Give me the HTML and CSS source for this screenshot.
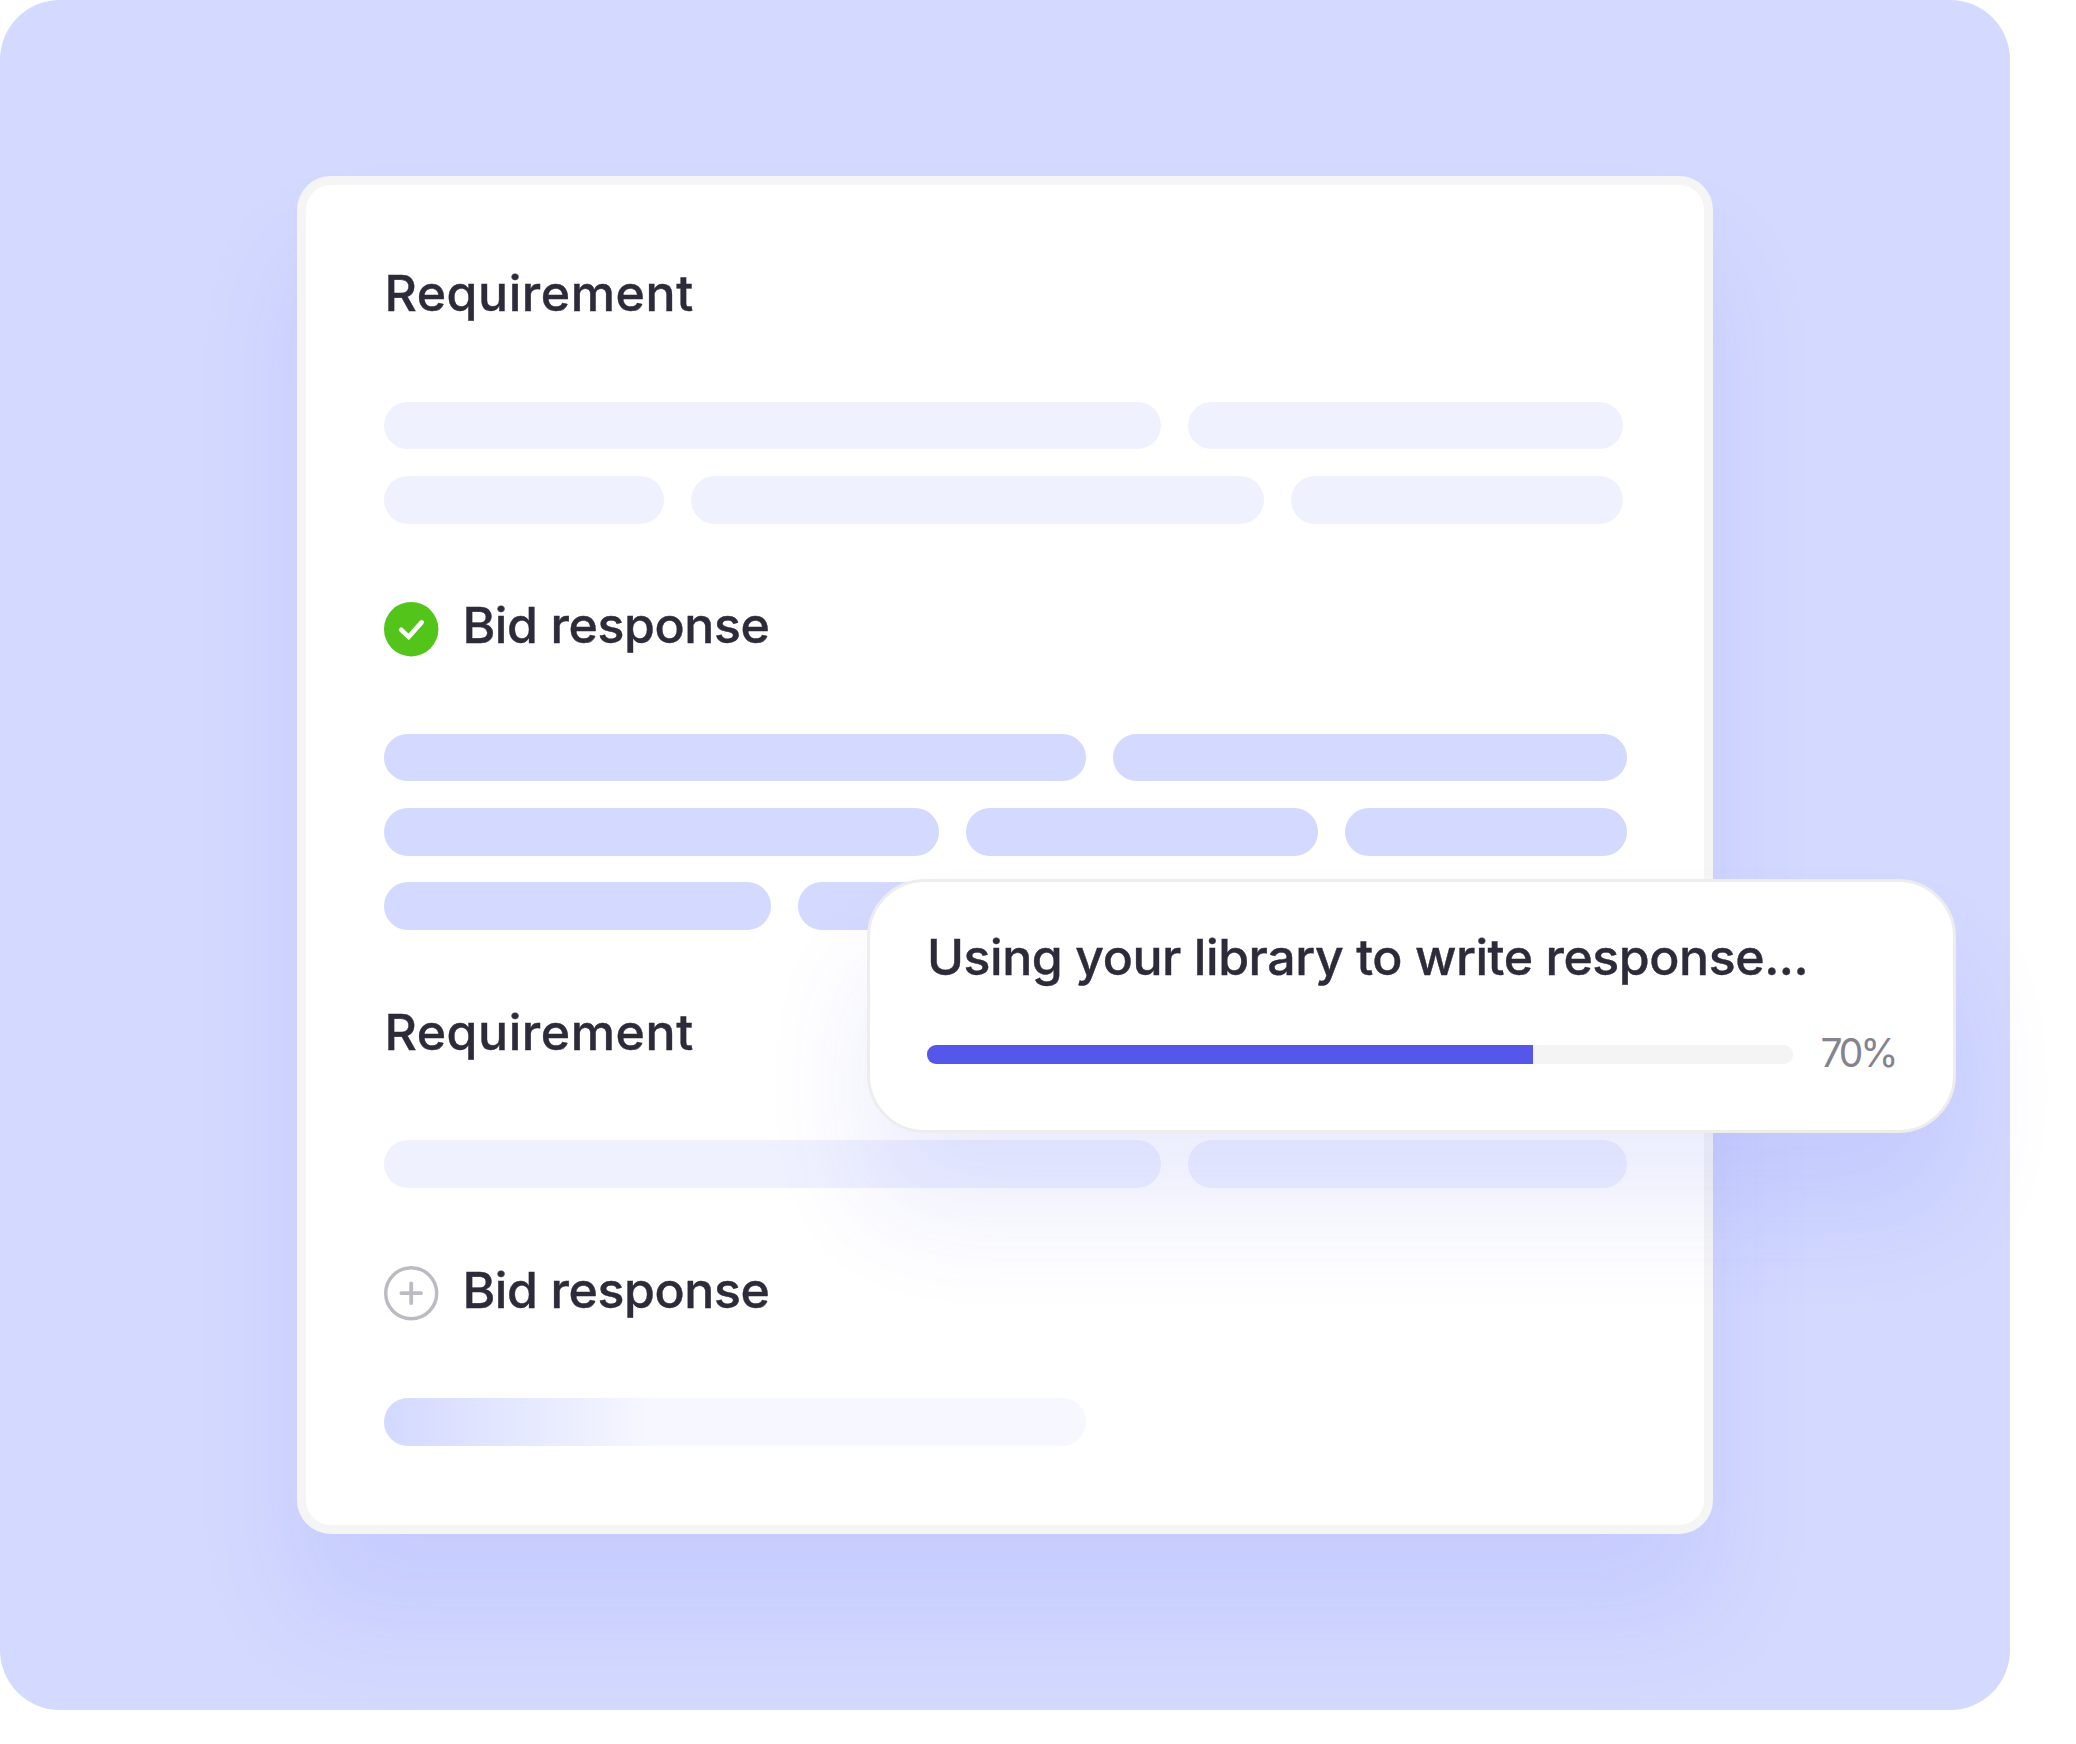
FILE: index.html
```html
<!DOCTYPE html>
<html lang="en">
<head>
    <meta charset="UTF-8">
    <title>Bid response</title>
    <link rel="stylesheet" href="styles.css">
</head>
<body>
    <div class="stage">
        <div class="card">
            <h2 class="title">Requirement</h2>
            <div class="lines light short">
                <div class="row"><span class="w777"></span><span class="fill"></span></div>
                <div class="row"><span class="w279"></span><span class="w573"></span><span class="fill"></span></div>
            </div>

            <h2 class="title">
                <svg class="icon" viewBox="0 0 54 54">
                    <circle cx="27" cy="27" r="27" fill="#52c41a"/>
                    <path d="M17 27.6l7.5 7L37.3 20.2" fill="none" stroke="#fff" stroke-width="4.6" stroke-linecap="round" stroke-linejoin="miter"/>
                </svg>
                <span class="bid">Bid response</span>
            </h2>
            <div class="lines dark">
                <div class="row"><span class="w702"></span><span class="fill"></span></div>
                <div class="row"><span class="w555"></span><span class="w351"></span><span class="fill"></span></div>
                <div class="row"><span class="w387"></span><span class="fill"></span></div>
            </div>

            <h2 class="title">Requirement</h2>
            <div class="lines light">
                <div class="row"><span class="w777"></span><span class="fill"></span></div>
            </div>

            <h2 class="title">
                <svg class="icon" viewBox="0 0 54 54">
                    <circle cx="27" cy="27" r="25.3" fill="none" stroke="#bcbbc3" stroke-width="3.4"/>
                    <path d="M17.3 27h19.4M27 17.3v19.4" fill="none" stroke="#bcbbc3" stroke-width="3.8" stroke-linecap="round"/>
                </svg>
                <span class="bid">Bid response</span>
            </h2>
            <div class="lines loading">
                <div class="row"><span class="w702"></span></div>
            </div>
        </div>

        <div class="popup">
            <p class="popup-title">Using your library to write response...</p>
            <div class="progress">
                <div class="track"><div class="bar" style="width: 70%"></div></div>
                <span class="percent">70%</span>
            </div>
        </div>
    </div>
</body>
</html>
```
FILE: styles.css
```css
*{
    margin: 0;
    padding: 0;
    box-sizing: border-box;
}
body{
    background: #fff;
    font-family: Inter, "Liberation Sans", sans-serif;
    color: #2d2b3a;
}
.stage{
    position: relative;
    width: 2010px;
    height: 1710px;
    padding: 176px 297px;
    border-radius: 60px;
    background: #d3d9ff;
}
.card{
    height: 1358px;
    padding: 78.3px 77.3px 0 78.4px;
    border: 9px solid #f5f5f5;
    border-radius: 34px;
    background: #fff;
    box-shadow: 0 80px 106px 0 rgba(84, 87, 234, 0.1);
}
.title{
    display: flex;
    align-items: center;
    height: 60px;
    margin-bottom: 78.3px;
    font-size: 50px;
    font-weight: 500;
    line-height: 60px;
    letter-spacing: 0.55px;
    -webkit-text-stroke: 0.4px #2d2b3a;
}
.icon{
    width: 54.4px;
    height: 54.4px;
    margin-top: 8px;
    margin-right: 23.6px;
}
.bid{
    letter-spacing: -0.4px;
}
/* placeholder text lines */
.lines{
    display: flex;
    flex-direction: column;
    gap: 26.4px;
    margin-bottom: 71.8px;
}
.row{
    display: flex;
    gap: 27px;
}
.row span{
    height: 47.8px;
    border-radius: 24px;
}
.short{
    margin-right: 3.4px;
}
.light span{
    background: #eff1ff;
}
.dark span{
    background: #d3d9ff;
}
.loading span{
    background: linear-gradient(90deg, #d3d9ff 0%, #f6f7ff 38%);
}
.row .fill{
    flex: 1;
}
.w279{
    width: 279.2px;
}
.w351{
    width: 351.4px;
}
.w387{
    width: 387px;
}
.w555{
    width: 555px;
}
.w573{
    width: 573px;
}
.w702{
    width: 702px;
}
.w777{
    width: 777px;
}
/* progress popup, lies over the card */
.popup{
    position: absolute;
    left: 867px;
    top: 879px;
    width: 1089px;
    height: 253.5px;
    padding: 45px 57px;
    border: 3px solid #ededed;
    border-radius: 58px;
    background: #fff;
    box-shadow: 0 80px 106px 0 rgba(84, 87, 234, 0.11);
}
.popup-title{
    font-size: 50px;
    font-weight: 500;
    line-height: 60px;
    letter-spacing: -0.44px;
    white-space: nowrap;
    -webkit-text-stroke: 0.4px #2d2b3a;
}
.progress{
    display: flex;
    align-items: center;
    gap: 28px;
    height: 50px;
    margin-top: 40px;
}
.track{
    overflow: hidden;
    flex: none;
    width: 865.5px;
    height: 19px;
    margin-top: 4px;
    border-radius: 9px;
    background: #f4f4f5;
}
.bar{
    height: 100%;
    background: #5457ea;
}
.percent{
    font-size: 39px;
    font-weight: 400;
    letter-spacing: -3.2px;
    color: #85838f;
}
```
